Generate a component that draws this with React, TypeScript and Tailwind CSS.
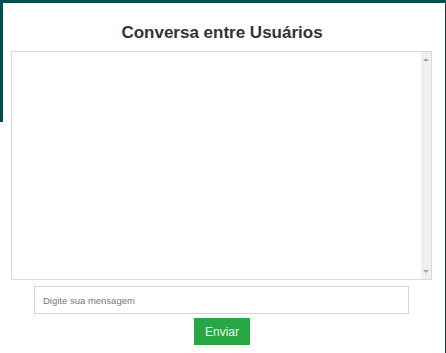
import React from "react";

export default function App() {
  return (
    <div className="relative w-[446px] h-[353px] bg-white overflow-hidden" style={{ fontFamily: '"Liberation Sans", Arial, sans-serif' }}>
      <div className="absolute left-0 top-0 w-[446px] h-[3px] bg-[#004d54]" />
      <div className="absolute left-0 top-0 w-[3px] h-[122px] bg-[#004d54]" />
      <div className="absolute right-0 top-0 w-[1px] h-[353px] bg-[#1f3f44]" />
      <div className="flex flex-col items-center pt-[22px]">
        <h1 className="ml-[-2px] text-[17px] leading-[22px] font-bold text-[#333]">Conversa entre Usuários</h1>
        <div className="mt-[7px] ml-[11px] self-start w-[421px] h-[229px] border border-[#d9d9d9] flex justify-end">
          <div className="w-[10px] h-full bg-[#f0f0f0] flex flex-col justify-between items-center py-[6px]">
            <div className="w-0 h-0 border-l-[3px] border-r-[3px] border-b-[3px] border-l-transparent border-r-transparent border-b-[#a3a3a3]" />
            <div className="w-0 h-0 border-l-[3px] border-r-[3px] border-t-[3px] border-l-transparent border-r-transparent border-t-[#a3a3a3]" />
          </div>
        </div>
        <input
          className="mt-[6px] ml-[-3px] w-[375px] h-[28px] border border-[#d4d4d4] px-[8px] text-[9.5px] text-[#333] placeholder:text-[#777] outline-none"
          placeholder="Digite sua mensagem"
        />
        <button className="mt-[4px] ml-[-2px] w-[56px] h-[27px] bg-[#28a745] text-[#e8f5e9] text-[12px]">Enviar</button>
      </div>
    </div>
  );
}
